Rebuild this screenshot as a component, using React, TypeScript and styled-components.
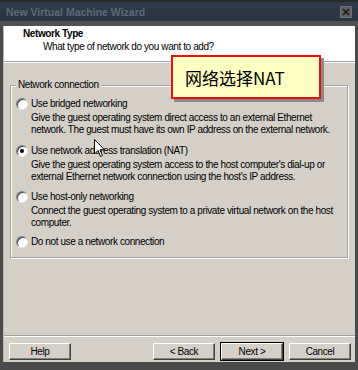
import React from "react";
import styled, { createGlobalStyle } from "styled-components";

const Global = createGlobalStyle`
  html, body { margin: 0; padding: 0; background: #3c3c3c; }
  * { box-sizing: border-box; }
`;

const Frame = styled.div`
  position: relative;
  width: 358px;
  height: 370px;
  background: #4a4a4a;
  display: flex;
  flex-direction: column;
  font-family: "Liberation Sans", Arial, sans-serif;
  font-size: 10px;
  letter-spacing: -0.4px;
  color: #000;
  overflow: hidden;
`;

const TitleBar = styled.div`
  height: 21px;
  flex: none;
  border-top: 2px solid #2a2a2a;
  background: linear-gradient(#2f3a4b, #2a3444);
  display: flex;
  align-items: center;
  justify-content: space-between;
  padding: 0 6px 0 6px;
`;

const TitleText = styled.span`
  font-weight: bold;
  font-size: 10.5px;
  letter-spacing: 0;
  color: #5a6a7c;
`;

const CloseBtn = styled.div`
  width: 12px;
  height: 12px;
  background: #5c5f63;
  border: 1px solid #6e7276;
  display: flex;
  align-items: center;
  justify-content: center;
`;

const Band = styled.div`
  height: 5px;
  flex: none;
  background: #505050;
`;

const Client = styled.div`
  flex: 1;
  display: flex;
  flex-direction: column;
  margin: 0 3px 8px 3px;
  border-left: 1px solid #b8b8b8;
`;

const Header = styled.div`
  height: 36px;
  flex: none;
  background: #fff;
  padding: 2px 0 0 19px;
  border-bottom: 1px solid #a0a0a0;
`;

const HeaderTitle = styled.div`
  font-weight: bold;
  line-height: 12px;
`;

const HeaderSub = styled.div`
  padding-left: 20px;
  line-height: 13px;
`;

const Body = styled.div`
  flex: 1;
  background: #d4d0c8;
  border-top: 1px solid #fff;
  display: flex;
  flex-direction: column;
  padding: 22px 4px 0 5px;
`;

const Group = styled.div`
  position: relative;
  height: 173px;
  margin: 0 3px 0 1px;
  border: 1px solid #a0a0a0;
  box-shadow: inset 1px 1px #fff, 1px 1px #fff;
  padding: 11px 8px 0 5px;
  white-space: nowrap;
`;

const Legend = styled.span`
  position: absolute;
  top: -7px;
  left: 5px;
  padding: 0 2px;
  background: #d4d0c8;
  line-height: 12px;
`;

const Option = styled.div<{ $gap: number }>`
  margin-bottom: ${(p) => p.$gap}px;
`;

const OptionRow = styled.div`
  display: flex;
  align-items: center;
  gap: 3px;
  line-height: 13px;
`;

const Radio = styled.span<{ $checked?: boolean }>`
  width: 12px;
  height: 12px;
  flex: none;
  border-radius: 50%;
  background: #fff;
  border: 1px solid;
  border-color: #808080 #e8e8e8 #e8e8e8 #808080;
  box-shadow: inset 1px 1px #404040;
  display: flex;
  align-items: center;
  justify-content: center;
  &::after {
    content: "";
    width: 4px;
    height: 4px;
    border-radius: 50%;
    background: ${(p) => (p.$checked ? "#000" : "transparent")};
  }
`;

const Desc = styled.div`
  padding-left: 15px;
  margin-top: 2px;
  line-height: 12px;
`;

const Spacer = styled.div`
  flex: 1;
`;

const Separator = styled.div`
  height: 2px;
  flex: none;
  border-top: 1px solid #a0a0a0;
  border-bottom: 1px solid #fff;
  margin: 0 -4px 6px -5px;
`;

const ButtonBar = styled.div`
  display: flex;
  align-items: center;
  margin-bottom: 2px;
`;

const Button = styled.div<{ $default?: boolean; $space?: number }>`
  width: 62px;
  height: 17px;
  margin-left: ${(p) => p.$space ?? 0}px;
  display: flex;
  align-items: center;
  justify-content: center;
  background: #d4d0c8;
  border: 1px solid;
  border-color: #fff #404040 #404040 #fff;
  box-shadow: inset -1px -1px #808080;
  outline: ${(p) => (p.$default ? "1px solid #000" : "none")};
`;

const Callout = styled.div`
  position: absolute;
  left: 171px;
  top: 55px;
  width: 150px;
  height: 44px;
  background: #ffffc4;
  border: 2px solid #e8100c;
  box-shadow: 3px 3px 0 #8a8a8a;
  display: flex;
  align-items: center;
  padding-left: 12px;
  font-family: "Noto Sans CJK SC", "Noto Sans", sans-serif;
  font-size: 17px;
  letter-spacing: 0;
  color: #000;
`;

const Cursor = styled.svg`
  position: absolute;
  left: 94px;
  top: 139px;
`;

export default function App() {
  return (
    <>
      <Global />
      <Frame>
        <TitleBar>
          <TitleText>New Virtual Machine Wizard</TitleText>
          <CloseBtn>
            <svg width="8" height="8" viewBox="0 0 8 8">
              <path d="M1 1 L7 7 M7 1 L1 7" stroke="#1e1e1e" strokeWidth="1.6" />
            </svg>
          </CloseBtn>
        </TitleBar>
        <Band />
        <Client>
          <Header>
            <HeaderTitle>Network Type</HeaderTitle>
            <HeaderSub>What type of network do you want to add?</HeaderSub>
          </Header>
          <Body>
            <Group>
              <Legend>Network connection</Legend>
              <Option $gap={8}>
                <OptionRow>
                  <Radio />
                  <span>Use bridged networking</span>
                </OptionRow>
                <Desc>
                  Give the guest operating system direct access to an external Ethernet
                  <br />
                  network. The guest must have its own IP address on the external network.
                </Desc>
              </Option>
              <Option $gap={7}>
                <OptionRow>
                  <Radio $checked />
                  <span>Use network address translation (NAT)</span>
                </OptionRow>
                <Desc>
                  Give the guest operating system access to the host computer's dial-up or
                  <br />
                  external Ethernet network connection using the host's IP address.
                </Desc>
              </Option>
              <Option $gap={6}>
                <OptionRow>
                  <Radio />
                  <span>Use host-only networking</span>
                </OptionRow>
                <Desc>
                  Connect the guest operating system to a private virtual network on the host
                  <br />
                  computer.
                </Desc>
              </Option>
              <Option $gap={0}>
                <OptionRow>
                  <Radio />
                  <span>Do not use a network connection</span>
                </OptionRow>
              </Option>
            </Group>
            <Spacer />
            <Separator />
            <ButtonBar>
              <Button>Help</Button>
              <Spacer />
              <Button>&lt; Back</Button>
              <Button $default $space={6}>Next &gt;</Button>
              <Button $space={6}>Cancel</Button>
            </ButtonBar>
          </Body>
        </Client>
        <Callout>网络选择NAT</Callout>
        <Cursor width="12" height="19" viewBox="0 0 12 19">
          <path d="M0.5 0.5 L0.5 15 L4 11.5 L6.5 17.5 L8.5 16.5 L6 10.8 L10.5 10.8 Z" fill="#fff" stroke="#000" strokeWidth="1" />
        </Cursor>
      </Frame>
    </>
  );
}
